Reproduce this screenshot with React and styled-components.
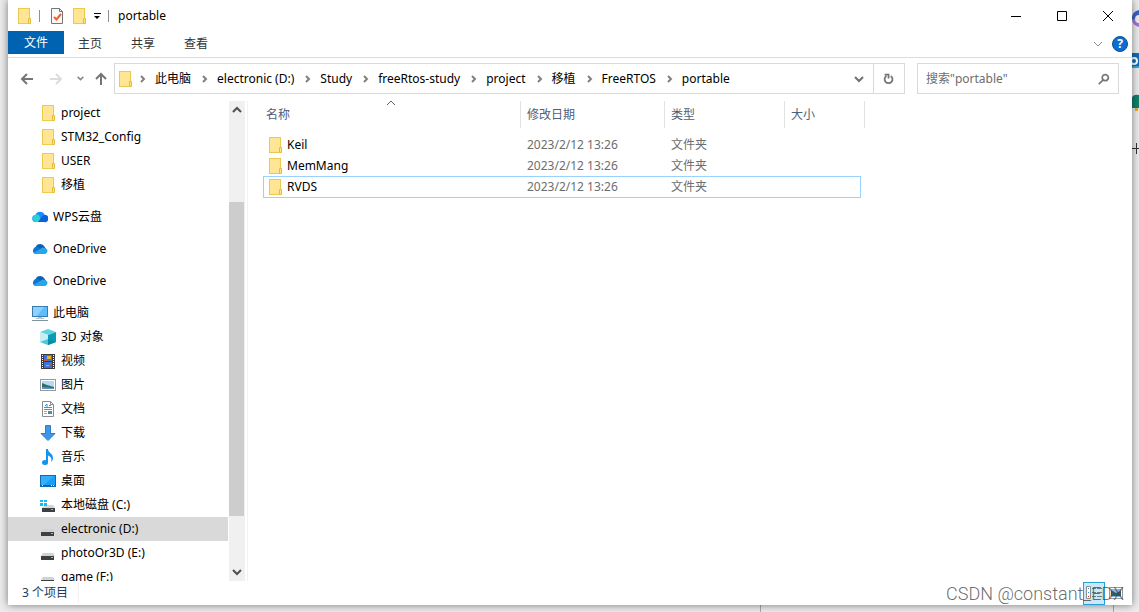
import React from "react";
import styled, { createGlobalStyle, css } from "styled-components";

const crumbs = ["此电脑", "electronic (D:)", "Study", "freeRtos-study", "project", "移植", "FreeRTOS", "portable"];

const tree = [
  { name: "project", icon: "folder", level: 1 },
  { name: "STM32_Config", icon: "folder", level: 1 },
  { name: "USER", icon: "folder", level: 1 },
  { name: "移植", icon: "folder", level: 1 },
  { name: "WPS云盘", icon: "wps", gap: true },
  { name: "OneDrive", icon: "onedrive", gap: true },
  { name: "OneDrive", icon: "onedrive", gap: true },
  { name: "此电脑", icon: "pc", gap: true },
  { name: "3D 对象", icon: "cube", level: 1 },
  { name: "视频", icon: "video", level: 1 },
  { name: "图片", icon: "picture", level: 1 },
  { name: "文档", icon: "doc", level: 1 },
  { name: "下载", icon: "download", level: 1 },
  { name: "音乐", icon: "music", level: 1 },
  { name: "桌面", icon: "desktop", level: 1 },
  { name: "本地磁盘 (C:)", icon: "system", level: 1 },
  { name: "electronic (D:)", icon: "drive", level: 1, selected: true },
  { name: "photoOr3D (E:)", icon: "drive", level: 1 },
  { name: "game (F:)", icon: "drive", level: 1 },
];

const files = [
  { name: "Keil", date: "2023/2/12 13:26", type: "文件夹" },
  { name: "MemMang", date: "2023/2/12 13:26", type: "文件夹" },
  { name: "RVDS", date: "2023/2/12 13:26", type: "文件夹", focused: true },
];

const shapes = {
  folder: (
    <>
      <rect x="2.5" y="0.5" width="11" height="15" fill="#ffe594" stroke="#ecc94f" />
      <path d="M12.5 15.5v-5h2v5z" fill="#ffe28a" stroke="#e5bd3b" />
    </>
  ),
  wps: (
    <>
      <path d="M4 13a3.500 3.500 0 0 1-.5-7A4.800 4.800 0 0 1 12.600 6 3.600 3.600 0 0 1 12 13z" fill="#1b8dfb" />
      <path d="M4.500 13A3.700 3.700 0 1 1 7.500 7L9 13z" fill="#27d3d6" />
      <path d="M6 13l4-5.500A3.600 3.600 0 1 1 12 13z" fill="#0a63dc" />
    </>
  ),
  onedrive: (
    <>
      <path d="M3.500 6a5 5 0 0 1 9-.5L14 8l-5 2z" fill="#0862b8" />
      <path d="M3.500 13A3.700 3.700 0 1 1 6 6l5.500 4z" fill="#1175cf" />
      <path d="M1.500 12L9 7.500a4 4 0 0 1 4.500-.3A3 3 0 0 1 13 13H3.500z" fill="#28a4ea" />
    </>
  ),
  pc: (
    <>
      <rect x="0.5" y="1.500" width="15" height="10" fill="#5dbcff" stroke="#3a7ba8" />
      <path d="M1 2h11L5 11H1z" fill="#8ed0ff" />
      <path d="M6 12h4v1H6z M4 13h8v1H4z" fill="#b8c4cc" />
      <path d="M0 15h16v1H0z" fill="#8093a3" />
    </>
  ),
  cube: (
    <>
      <path d="M0 3l8-3 8 3-8 3z" fill="#5fd3df" />
      <path d="M0 3l8 3v10l-8-3z" fill="#c4f0f4" />
      <path d="M16 3L8 6v10l8-3z" fill="#0b9bb8" />
      <path d="M0 13l8-3v6z" fill="#4fc6d6" />
      <path d="M8 10l8 3-8 3z" fill="#0a8ca9" />
    </>
  ),
  video: (
    <>
      <path d="M1 1h14v15H1z" fill="#3c3c3c" />
      <path d="M4 2h8v6H4z" fill="#3e73d8" />
      <path d="M4 9h8v6H4z" fill="#3e73d8" />
      <path d="M7 3h4v3H7z M6 12h3v1H6z" fill="#e5b51c" />
      <path d="M4 6h3v2H4z M9 10h2v2H9z" fill="#cf5539" />
      <path d="M2.500 2v13 M13.500 2v13" stroke="#fff" strokeDasharray="1 1" />
    </>
  ),
  picture: (
    <>
      <rect x="0.5" y="2.500" width="15" height="11" fill="#fff" stroke="#999" />
      <path d="M2 4h12v8H2z" fill="#b4d9f7" />
      <path d="M2 6l5 2 7 2v1H2z" fill="#2f6f6a" />
      <path d="M2 10l12 1v1H2z" fill="#5f92c2" />
    </>
  ),
  doc: (
    <>
      <path d="M2.500.5h8l3 3v12h-11z" fill="#fff" stroke="#8d8d8d" />
      <path d="M10.500.5v3h3" fill="none" stroke="#8d8d8d" />
      <path d="M9 4.500h2 M4 6.500h8 M4 8.500h8 M5 5l2-2v3" stroke="#2f9bdc" fill="none" />
      <path d="M4 10.500h3 M4 12.500h3" stroke="#aaa" />
      <path d="M8 10h4v3H8z" fill="#4c8f9c" />
    </>
  ),
  download: <path d="M5.500.5h5v8h4.500L8 15.500 1 8.500h4.500z" fill="#3d96e8" stroke="#2c7dcb" />,
  music: (
    <>
      <ellipse cx="5" cy="13.500" rx="3" ry="2.500" fill="#0f95f2" />
      <path d="M6 0h2c0 4 5 4 5 9 0 2-1 3-2 4 1-4 0-5-3-6.500V13H6z" fill="#0f95f2" />
    </>
  ),
  desktop: (
    <>
      <rect x="0.5" y="2.500" width="15" height="11" fill="#16a0fb" stroke="#0d6cb4" />
      <path d="M1 3h13L4 12H1z" fill="#34aefc" />
      <path d="M1 12h14v1H1z" fill="#0a5c9c" />
      <path d="M2 12.500h1 M11 12.500h3" stroke="#fff" strokeDasharray="1 1" />
    </>
  ),
  system: (
    <>
      <path d="M5 8h8l2 3H2z" fill="#d3d6d8" />
      <rect x="2" y="11" width="13" height="4" fill="#3c4043" />
      <rect x="11" y="12" width="2" height="1" fill="#5be35b" />
      <path d="M0 3h3v2H0z M4 3h3v2H4z M0 6h3v3H0z M4 6h3v3H4z" fill="#11bdf2" />
    </>
  ),
  drive: (
    <>
      <path d="M3 8h10l2 3H1z" fill="#d0d3d5" />
      <rect x="1" y="11" width="13" height="4" fill="#3c4043" />
      <rect x="11" y="12" width="2" height="1" fill="#5be35b" />
    </>
  ),
  check: (
    <>
      <path d="M2.500.5h8l3 3v12h-11z" fill="#f8f8f8" stroke="#767676" />
      <path d="M10.500.5v3h3" fill="none" stroke="#767676" />
      <path d="M5 9l2.500 2.500L12 6" fill="none" stroke="#f0622d" strokeWidth="2" />
    </>
  ),
  thumbs: (
    <>
      <rect x="1.500" y="2.500" width="13" height="11" fill="#fff" stroke="#999" />
      <path d="M3 4h10v8H3z" fill="#7db8ee" />
      <path d="M3 5l5 3 5-2v5H3z" fill="#2d5d66" />
    </>
  ),
};

const Glyph = ({ name }) => (
  <svg width="16" height="16" viewBox="0 0 16 16" aria-hidden="true">
    {shapes[name]}
  </svg>
);

const Line = ({ d, size = 16, width = 1, color = "#5f5f5f" }) => (
  <svg width={size} height={size} viewBox="0 0 16 16" aria-hidden="true">
    <path d={d} fill="none" stroke={color} strokeWidth={width} />
  </svg>
);

const App = () => {
  return (
    <Desktop>
      <GlobalStyle />
      <Window>
        <TitleBar>
          <Glyph name="folder" />
          <Divider />
          <PlainButton aria-label="属性"><Glyph name="check" /></PlainButton>
          <PlainButton aria-label="新建文件夹"><Glyph name="folder" /></PlainButton>
          <CustomizeButton aria-label="自定义快速访问工具栏">
            <svg width="8" height="8" viewBox="0 0 8 8">
              <path d="M1 1h7v1H1z M1 4h6L4 7z" fill="#000" />
            </svg>
          </CustomizeButton>
          <Divider />
          <Title>portable</Title>
          <Captions>
            <CaptionButton aria-label="最小化"><Line d="M3 8.500h10" color="#000" /></CaptionButton>
            <CaptionButton aria-label="最大化"><Line d="M3.500 3.500h9v9h-9z" color="#000" /></CaptionButton>
            <CaptionButton aria-label="关闭"><Line d="M3 3l10 10 M13 3L3 13" color="#000" /></CaptionButton>
          </Captions>
        </TitleBar>

        <Ribbon>
          <Tab $active>文件</Tab>
          <Tab>主页</Tab>
          <Tab>共享</Tab>
          <Tab>查看</Tab>
          <RibbonEnd>
            <PlainButton aria-label="展开功能区"><Line d="M4 6l4 4 4-4" color="#8c8c8c" /></PlainButton>
            <HelpButton aria-label="帮助">?</HelpButton>
          </RibbonEnd>
        </Ribbon>

        <NavBar>
          <NavButtons>
            <PlainButton aria-label="返回"><Line d="M14 8H3 M8 3L3 8l5 5" width={2} color="#757575" /></PlainButton>
            <PlainButton aria-label="前进"><Line d="M2 8h11 M8 3l5 5-5 5" width={2} color="#dcdcdc" /></PlainButton>
            <SmallButton aria-label="最近浏览的位置"><Line d="M3 5l5 5 5-5" size={9} width={3} color="#8a8a8a" /></SmallButton>
            <PlainButton aria-label="上移"><Line d="M8 14V3 M3 8l5-5 5 5" width={2} color="#757575" /></PlainButton>
          </NavButtons>
          <AddressBar>
            <Glyph name="folder" />
            {crumbs.map((c) => (
              <Crumb key={c}>
                <Line d="M6 5l3 3-3 3" width={2} color="#808080" />
                <a href="#">{c}</a>
              </Crumb>
            ))}
            <AddressEnd>
              <PlainButton aria-label="以前的位置"><Line d="M4 6l4 4 4-4" width={2} color="#707070" /></PlainButton>
            </AddressEnd>
            <Refresh aria-label="刷新">
              <Line d="M10 4.500a4.500 4.500 0 1 1-5 0 M3 3h4.500v4.500" width={2} color="#757575" size={14} />
            </Refresh>
          </AddressBar>
          <SearchBox>
            <input type="text" aria-label="搜索" placeholder={'搜索"portable"'} />
            <Line d="M2 14l5-5 M9.500 3a3.500 3.500 0 1 1-.1 0z" width={2} color="#757575" size={14} />
          </SearchBox>
        </NavBar>

        <Body>
          <Sidebar>
            <Tree>
              {tree.map((t, i) => (
                <TreeItem key={i} href="#" $level={t.level} $gap={t.gap} $selected={t.selected}>
                  <Glyph name={t.icon} />
                  {t.name}
                </TreeItem>
              ))}
            </Tree>
            <ScrollBar>
              <ScrollButton aria-label="向上滚动"><Line d="M4 10l4-4 4 4" width={2} color="#505050" /></ScrollButton>
              <Track><Thumb /></Track>
              <ScrollButton aria-label="向下滚动"><Line d="M4 6l4 4 4-4" width={2} color="#505050" /></ScrollButton>
            </ScrollBar>
          </Sidebar>
          <Content>
            <FileTable>
              <colgroup>
                <NameCol />
                <DateCol />
                <TypeCol />
                <SizeCol />
                <EdgeCol />
              </colgroup>
              <thead>
                <tr>
                  <HeadCell $first>
                    名称
                    <SortMark><Line d="M4 10l4-4 4 4" /></SortMark>
                  </HeadCell>
                  <HeadCell>修改日期</HeadCell>
                  <HeadCell>类型</HeadCell>
                  <HeadCell colSpan={2}>大小</HeadCell>
                </tr>
              </thead>
              <tbody>
                {files.map((f) => (
                  <FileRow key={f.name} $focused={f.focused}>
                    <td><FileName><Glyph name="folder" />{f.name}</FileName></td>
                    <td>{f.date}</td>
                    <td>{f.type}</td>
                    <td></td>
                  </FileRow>
                ))}
              </tbody>
            </FileTable>
          </Content>
        </Body>

        <StatusBar>
          <Count>3 个项目</Count>
          <ViewButton $active aria-label="详细信息">
            <svg width="16" height="16" viewBox="0 0 16 16">
              <path d="M.5 1.500h4v12h-4z" fill="#fff" stroke="#8f8f8f" />
              <path d="M2 3h1v1H2z M2 7h1v1H2z" fill="#2b86d8" />
              <path d="M2 11h1v1H2z" fill="#e01f1f" />
              <path d="M6 3.500h4 M11 3.500h5 M6 7.500h4 M11 7.500h5 M6 11.500h4 M11 11.500h5" stroke="#6c7c86" />
            </svg>
          </ViewButton>
          <ViewButton aria-label="大缩略图"><Glyph name="thumbs" /></ViewButton>
        </StatusBar>
        <Watermark>CSDN @constant_EDX</Watermark>
      </Window>

      <SideApps>
        <svg width="7" height="160" viewBox="0 0 7 160" aria-hidden="true">
          <path d="M7 10A8 8 0 0 0 0 19h7z" fill="#3d62c4" />
          <path d="M0 19a8 8 0 0 0 7 8v-8z" fill="#a476d8" />
          <path d="M7 15a4 4 0 0 0 0 8z" fill="#eee" />
          <path d="M0 53h7v15H0z" fill="#0f6cbd" />
          <path d="M0 66h7v2H0z" fill="#28a8ea" />
          <circle cx="2" cy="61" r="3" fill="none" stroke="#fff" strokeWidth="2" />
          <path d="M0 97q2-3 7-2v13H0z" fill="#12806a" />
          <path d="M3 108h3v3H3z" fill="#f2a61c" />
          <path d="M0 148.500h7 M4.500 143v11" stroke="#333" />
        </svg>
      </SideApps>
      <BottomPanes>
        <span />
        <span />
      </BottomPanes>
    </Desktop>
  );
};

const GlobalStyle = createGlobalStyle`
  body {
    margin: 0;
    font-family: "Noto Sans", "Noto Sans CJK SC", sans-serif;
    font-size: 12px;
    line-height: 20px;
    color: #000;
  }

  * {
    box-sizing: border-box;
  }

  button, input {
    font: inherit;
    color: inherit;
  }

  a {
    color: inherit;
    text-decoration: none;
  }

  svg {
    display: block;
    flex: none;
  }
`

const Desktop = styled.div`
  display: grid;
  grid-template-columns: minmax(0, 1fr) 7px;
  grid-template-rows: minmax(0, 1fr) 7px;
  height: 100vh;
  padding-left: 8px;
  background: #ececec;
  overflow: hidden;
`

const Window = styled.main`
  position: relative;
  display: flex;
  flex-direction: column;
  background: #fff;
  box-shadow: 0 0 8px rgba(0, 0, 0, .5);
`

const SideApps = styled.div`
  overflow: hidden;
`

const BottomPanes = styled.div`
  grid-column: 1 / 3;
  display: flex;
  justify-content: flex-end;
  padding-right: 25px;

  span {
    border-right: 1px solid #a8a8a8;
  }

  span:last-child {
    width: 353px;
  }
`

const PlainButton = styled.button`
  display: flex;
  align-items: center;
  justify-content: center;
  flex: none;
  padding: 0;
  border: 0;
  background: none;
`

const TitleBar = styled.header`
  display: flex;
  align-items: center;
  height: 31px;
  flex: none;
  padding-left: 8px;
  gap: 6px;
`

const Divider = styled.span`
  width: 1px;
  height: 12px;
  background: #8f8f8f;
  margin: 0 3px 0 1px;
`

const CustomizeButton = styled(PlainButton)`
  width: 8px;
`

const Title = styled.h1`
  margin: 0;
  font-size: 12px;
  font-weight: 400;
`

const Captions = styled.div`
  display: flex;
  align-self: stretch;
  margin-left: auto;
  padding-right: 1px;
`

const CaptionButton = styled(PlainButton)`
  width: 46px;
`

const Ribbon = styled.nav`
  display: flex;
  flex: none;
  height: 27px;
  padding-bottom: 3px;
  border-bottom: 1px solid #dcdcdc;
`

const Tab = styled.button`
  padding: ${(p) => (p.$active ? "1px 16px 0" : "2px 15px 0 14px")};
  border: 0;
  background: ${(p) => (p.$active ? "#0063b1" : "none")};
  color: ${(p) => (p.$active ? "#fff" : "#333")};
`

const RibbonEnd = styled.div`
  display: flex;
  align-items: center;
  gap: 6px;
  margin-left: auto;
  padding: 2px 4px 0 0;
`

const HelpButton = styled.button`
  width: 16px;
  height: 16px;
  padding: 0;
  border: 1px solid #0b4f92;
  border-radius: 50%;
  background: #0a6fd0;
  color: #fff;
  font-weight: 700;
  line-height: 14px;
`

const NavBar = styled.div`
  display: flex;
  align-items: center;
  flex: none;
  height: 43px;
  padding: 5px 13px 7px 0;
`

const NavButtons = styled.div`
  display: flex;
  align-items: center;
  flex: none;
  width: 106px;
  padding-left: 11px;
  gap: 13px;
`

const SmallButton = styled(PlainButton)`
  width: 9px;
  margin: 0 -5px 0 -1px;
`

const AddressBar = styled.div`
  flex: 1;
  display: flex;
  align-items: center;
  height: 31px;
  min-width: 0;
  padding-left: 2px;
  margin-right: 12px;
  border: 1px solid #d9d9d9;
`

const Crumb = styled.span`
  display: flex;
  align-items: center;
  gap: 4px;
  padding: 0 4px 0 2px;
  white-space: nowrap;
`

const AddressEnd = styled.div`
  margin-left: auto;
  padding-right: 6px;
`

const Refresh = styled(PlainButton)`
  align-self: stretch;
  width: 31px;
  border-left: 1px solid #d9d9d9;
`

const SearchBox = styled.label`
  display: flex;
  align-items: center;
  width: 202px;
  height: 31px;
  padding: 0 7px 0 8px;
  border: 1px solid #d9d9d9;

  input {
    flex: 1;
    min-width: 0;
    padding: 0;
    border: 0;
    outline: 0;
    background: none;
  }

  input::placeholder {
    color: #6d6d6d;
    opacity: 1;
  }
`

const Body = styled.div`
  flex: 1;
  min-height: 0;
  display: flex;
`

const Sidebar = styled.aside`
  display: flex;
  width: 240px;
  flex: none;
  border-right: 1px solid #f2f2f2;
`

const Tree = styled.nav`
  width: 220px;
  overflow: hidden;
`

const TreeItem = styled.a`
  display: flex;
  align-items: center;
  gap: 5px;
  height: 24px;
  margin-top: ${(p) => (p.$gap ? "8px" : "0")};
  padding-left: ${(p) => (p.$level ? "32px" : "24px")};
  background: ${(p) => (p.$selected ? "#d9d9d9" : "none")};
  white-space: nowrap;
`

const ScrollBar = styled.div`
  display: flex;
  flex-direction: column;
  width: 16px;
  margin-left: 1px;
  background: #f0f0f0;
`

const ScrollButton = styled(PlainButton)`
  width: 15px;
  height: 18px;
`

const Track = styled.div`
  flex: 1;
  display: flex;
  flex-direction: column;
  justify-content: flex-end;
  padding-bottom: 47px;
`

const Thumb = styled.div`
  height: 79%;
  width: 15px;
  background: #cdcdcd;
`

const Content = styled.section`
  flex: 1;
  min-width: 0;
  padding-left: 15px;
`

const FileTable = styled.table`
  width: 602px;
  table-layout: fixed;
  border-spacing: 0;
`

const NameCol = styled.col`
  width: 258px;
`

const DateCol = styled.col`
  width: 144px;
`

const TypeCol = styled.col`
  width: 120px;
`

const SizeCol = styled.col`
  width: 76px;
`

const EdgeCol = styled.col`
  width: 4px;
`

const HeadCell = styled.th`
  position: relative;
  height: 27px;
  padding: 0 0 0 ${(p) => (p.$first ? "3px" : "6px")};
  border-right: 1px solid #e2e2e2;
  color: #4c607a;
  font-weight: 400;
  text-align: left;
`

const SortMark = styled.span`
  position: absolute;
  top: -6px;
  left: calc(50% - 9px);
`

const FileRow = styled.tr`
  td {
    height: 21px;
    padding: 0 0 0 6px;
    line-height: 19px;
    color: #6d6d6d;
  }

  td:first-child {
    padding-left: 4px;
    color: #000;
  }

  tbody &:first-child td {
    border-top: 6px solid transparent;
    height: 27px;
  }

  ${(p) => p.$focused && css`
    td {
      height: 22px;
      border: solid #99d1ff;
      border-width: 1px 0;
      vertical-align: top;
    }

    td:first-child {
      padding-left: 3px;
      border-left-width: 1px;
    }

    td:last-child {
      border-right-width: 1px;
    }
  `}
`

const FileName = styled.span`
  display: flex;
  align-items: center;
  gap: 4px;
`

const StatusBar = styled.footer`
  display: flex;
  align-items: center;
  flex: none;
  height: 24px;
  padding-right: 5px;
`

const Count = styled.span`
  padding: 0 10px 0 14px;
  margin-right: auto;
  border-right: 1px solid #f0f0f0;
  color: #1e395b;
`

const ViewButton = styled(PlainButton)`
  width: 22px;
  height: 23px;
  border: 1px solid ${(p) => (p.$active ? "#26a0da" : "transparent")};
  background: ${(p) => (p.$active ? "#cbe8f6" : "none")};
`

const Watermark = styled.span`
  position: absolute;
  right: 8px;
  bottom: 1px;
  font-family: Roboto, sans-serif;
  font-weight: 300;
  font-size: 18px;
  color: rgba(70, 70, 70, .8);
  pointer-events: none;
`

export default App;
